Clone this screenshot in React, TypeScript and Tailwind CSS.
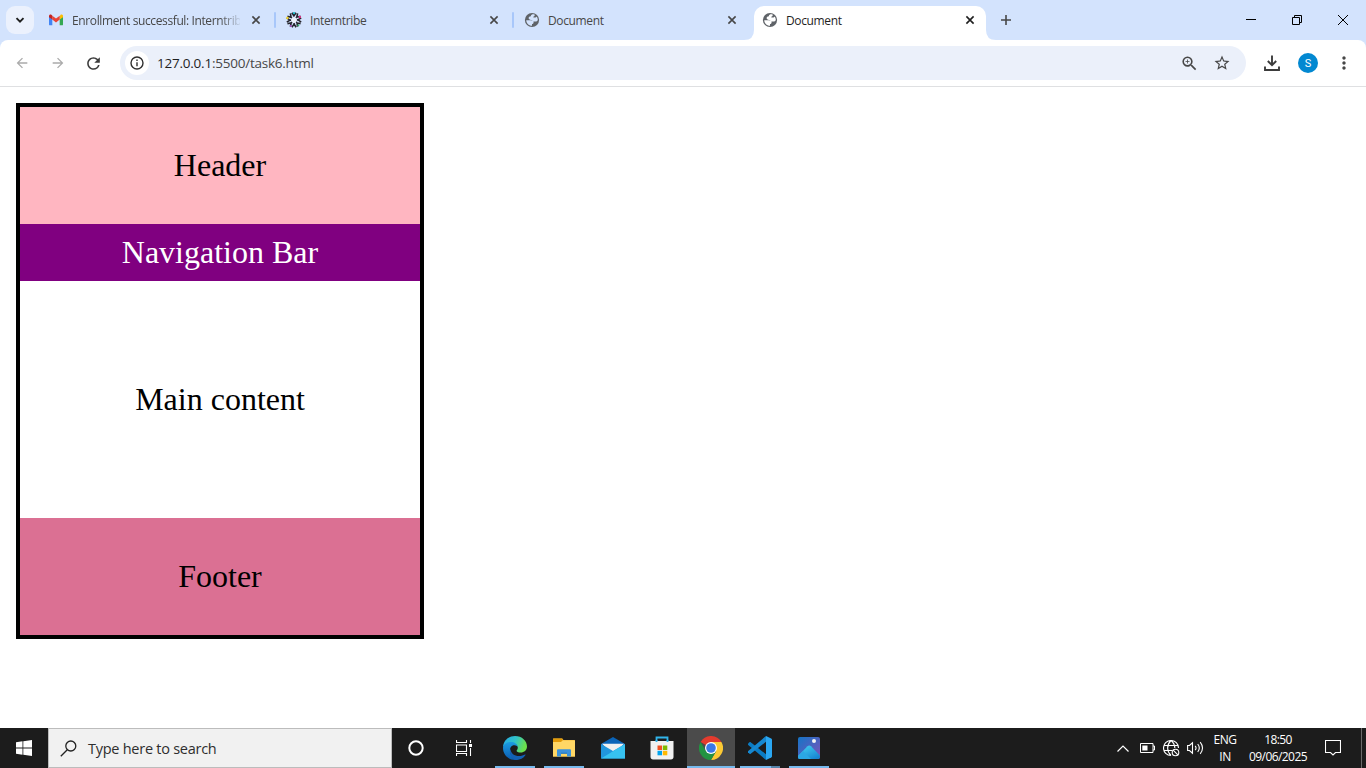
import type { ReactNode } from "react";
import { MdArrowBack, MdArrowForward, MdRefresh, MdStarOutline, MdZoomIn, MdMoreVert } from "react-icons/md";

const ui = "font-['Open_Sans','Noto_Sans',sans-serif]";

function Close({ color }: { color: string }) {
  return (
    <svg width="16" height="16" viewBox="0 0 16 16" fill="none" stroke={color} strokeWidth="1.6">
      <path d="M4.4 4.4l7.2 7.2M11.6 4.4l-7.2 7.2" />
    </svg>
  );
}

function Gmail() {
  return (
    <svg width="16" height="16" viewBox="0 0 16 16">
      <path d="M1 4.2v8.2c0 .5.4.9.9.9H4.300V7z" fill="#4285f4" />
      <path d="M15 4.200v8.200c0 .5-.4.9-.9.9h-2.400V7z" fill="#34a853" />
      <path d="M11.700 4.200V7.600L15 5.200V4c0-1.300-1.400-1.900-2.400-1.200z" fill="#fbbc04" />
      <path d="M4.300 7.600V3.800L8 6.600l3.700-2.800v3.800L8 10.400z" fill="#ea4335" />
      <path d="M1 4v1.200l3.300 2.400V3.800L3.400 2.800C2.400 2 1 2.700 1 4z" fill="#c5221f" />
    </svg>
  );
}

function Globe({ land }: { land: string }) {
  return (
    <svg width="16" height="16" viewBox="0 0 16 16">
      <circle cx="8" cy="8" r="7.100" fill="#5f6368" />
      <path
        d="M10.800 2.700C9.900 2.300 8.700 2.300 7.900 2.500 7 3 6.900 3.600 6.900 4.200 5.500 4.200 4.600 5 4.600 6.100S5.600 7.900 7 7.900h1.200c.2 1.100.9 1.600 1.900 1.600h1.500c.9 0 1.500-.5 2.200-1.300.1-1.500-.4-2.700-1.200-3.700-.3.800-.9 1.100-1.700 1.100H9.400V4.600c.9-.1 1.300-.9 1.400-1.900zM2.200 8.300c.1 2.400 1.700 4.500 3.900 5.200.5.200 1.200.3 1.900.3v-1.700c1-.1 1.600-.7 1.600-1.600 0-1.400-.9-2.200-2.400-2.200z"
        fill={land}
      />
    </svg>
  );
}

function Tribe() {
  return (
    <svg width="16" height="16" viewBox="0 0 16 16">
      <path d="M8 5L10.200 5.700 11 8l-.9 2.200L8 11l-2.200-.8L5 8l.8-2.300z" fill="#eef2fb" />
      {[0, 45, 90, 135, 180, 225, 270, 315].map((a) => (
        <path key={a} transform={`rotate(${a} 8 8)`} d="M5.900.8L7.900 3.900 10.100.8M7.900 3.600v1.500" fill="none" stroke="#25242c" strokeWidth="1.600" />
      ))}
      <circle cx="8" cy="1.200" r="1.100" fill="#18b6c4" />
      <circle cx="13.800" cy="5" r="1.200" fill="#e72c83" />
      <circle cx="1.400" cy="6" r="1.200" fill="#f3d321" />
      <circle cx="4.800" cy="14" r="1" fill="#a34fc0" />
      <circle cx="12.300" cy="13.300" r="1" fill="#35a96b" />
    </svg>
  );
}

function Tab({ icon, title, active, fade }: { icon: ReactNode; title: string; active?: boolean; fade?: boolean }) {
  return (
    <div className={active ? "relative flex h-[34px] w-[232px] items-start rounded-t-[10px] bg-white pt-1.5 pl-2" : "flex h-[34px] w-[232px] items-start pt-1.5 pl-2"}>
      {active && (
        <svg className="absolute bottom-0 -left-2.5" width="252" height="10" viewBox="0 0 252 10" fill="#fff">
          <path d="M0 10Q10 10 10 0V10zM252 10Q242 10 242 0V10z" />
        </svg>
      )}
      <span className="flex size-4 items-center justify-center">{icon}</span>
      <span className={`ml-2 h-5 w-[168px] overflow-hidden text-[12px] leading-[17px] whitespace-nowrap ${active ? "text-[#1f1f1f]" : "text-[#474747]"} ${fade ? "tracking-[-0.38px] [mask-image:linear-gradient(to_right,black_148px,transparent_170px)]" : "tracking-[-0.36px]"}`}>
        {title}
      </span>
      <span className="ml-2">
        <Close color={active ? "#1f1f1f" : "#474747"} />
      </span>
    </div>
  );
}

function Separator() {
  return <div className="mx-0.5 mt-1.5 h-4 w-0.5 rounded-full bg-[#a8c7fa]" />;
}

function Chrome() {
  return (
    <>
      <div className="flex h-10 items-start bg-[#d3e3fd] pt-1.5 pl-1.5">
        <div className="mr-1.5 flex size-7 items-center justify-center rounded-[9px] bg-[#ebf1fd]">
          <svg width="12" height="12" viewBox="0 0 12 12" fill="none" stroke="#1f1f1f" strokeWidth="1.900">
            <path d="M2.500 4.200L6 7.700l3.500-3.500" />
          </svg>
        </div>
        <Tab icon={<Gmail />} title="Enrollment successful: Interntrib" fade />
        <Separator />
        <Tab icon={<Tribe />} title="Interntribe" />
        <Separator />
        <Tab icon={<Globe land="#d3e3fd" />} title="Document" />
        <div className="w-1.5" />
        <Tab icon={<Globe land="#ffffff" />} title="Document" active />
        <svg className="ml-3 mt-1.5" width="16" height="16" viewBox="0 0 16 16" stroke="#474747" strokeWidth="1.600">
          <path d="M8 3v10M3 8h10" />
        </svg>
        <div className="-mt-1.5 ml-auto flex h-10">
          <div className="flex w-[46px] items-center justify-center">
            <svg width="10" height="10" viewBox="0 0 10 10" stroke="#000"><path d="M0 4.500h10" /></svg>
          </div>
          <div className="flex w-[46px] items-center justify-center">
            <svg width="10" height="10" viewBox="0 0 10 10" fill="none" stroke="#000"><path d="M.5 2.500h7v7h-7zM2.500 2.500v-2h7v7h-2" /></svg>
          </div>
          <div className="flex w-[46px] items-center justify-center">
            <svg width="10" height="10" viewBox="0 0 10 10" stroke="#000"><path d="M0 0l10 10M10 0L0 10" /></svg>
          </div>
        </div>
      </div>
      <div className="bg-[#d3e3fd]">
        <div className="flex h-[47px] items-start rounded-t-lg border-b border-[#dfe0e2] bg-white pt-1.5">
          <div className="flex h-[34px] w-[120px] items-center pl-3.5">
            <MdArrowBack color="#ababab" className="size-4 shrink-0" />
            <MdArrowForward color="#ababab" className="ml-5 size-4 shrink-0" />
            <MdRefresh color="#3c3c3c" className="ml-[18px] size-[19px] shrink-0" />
          </div>
          <div className="flex h-[34px] w-[1126px] items-center rounded-full bg-[#ebf0fa] pl-[5px]">
            <div className="flex size-6 items-center justify-center rounded-full bg-white">
              <svg width="14" height="14" viewBox="0 0 14 14" fill="none" stroke="#303030" strokeWidth="1.400">
                <circle cx="7" cy="7" r="6" />
                <path d="M7 6.300v4M7 3.500v1.500" />
              </svg>
            </div>
            <span className="ml-2 text-[13.500px] leading-4 tracking-[-0.23px] whitespace-nowrap text-[#474747]">
              <span className="text-[#1f1f1f]">127.0.0.1</span>:5500/task6.html
            </span>
            <MdZoomIn size={19} color="#474747" className="ml-auto" />
            <MdStarOutline size={18} color="#474747" className="mr-[15px] ml-[14px]" />
          </div>
          <div className="flex h-[34px] items-center">
            <svg className="ml-[17px]" width="18" height="18" viewBox="0 0 18 18" fill="none" stroke="#3c3c3c" strokeWidth="1.900">
              <path d="M9 1.500v9.500M4.800 7l4.200 4.200L13.200 7M2 12.500V16h14v-3.500" />
            </svg>
            <div className="ml-[17px] flex size-5 items-center justify-center rounded-full bg-[#0288d1] font-[Roboto] text-[11px] leading-none text-white">S</div>
            <MdMoreVert size={20} color="#474747" className="ml-4" />
          </div>
        </div>
      </div>
    </>
  );
}

function Page() {
  return (
    <main className="h-[641px] bg-white p-4 font-['Liberation_Serif',serif] text-[32px] leading-[37px] text-black">
      <div className="w-[408px] border-4 border-black text-center">
        <div className="bg-[#ffb6c1] py-10">Header</div>
        <div className="bg-[#800080] py-2.5 text-white">Navigation Bar</div>
        <div className="py-[100px]">Main content</div>
        <div className="bg-[#db7093] py-10">Footer</div>
      </div>
    </main>
  );
}

function TaskItem({ children, bar, active }: { children: ReactNode; bar?: ReactNode; active?: boolean }) {
  return (
    <div className={active ? "mx-[0.5px] flex h-10 w-12 flex-col items-center bg-[#4b4b4b]" : "mx-[0.5px] flex h-10 w-12 flex-col items-center"}>
      <div className="flex h-[38px] items-center pt-0.5">{children}</div>
      {bar}
    </div>
  );
}

const Bar = <div className="h-0.5 w-10 bg-[#76b9ed]" />;

function Edge() {
  return (
    <svg width="24" height="24" viewBox="0 0 24 24">
      <defs>
        <linearGradient id="e1" x1="0" y1="0" x2="1" y2=".3"><stop stopColor="#24a8e8" /><stop offset=".55" stopColor="#31c3c8" /><stop offset="1" stopColor="#6be04c" /></linearGradient>
        <linearGradient id="e2" x1="0" y1="0" x2="0" y2="1"><stop stopColor="#1b9de2" /><stop offset="1" stopColor="#0b5bb0" /></linearGradient>
      </defs>
      <path d="M0 11C.5 4.500 5.500 0 12 0c7 0 12 5 12 10.500 0 3.800-3 6-6.200 6-2.600 0-4.200-.9-4.200-1.800 0-.8 1.200-1.200 1.200-3 0-2.500-2.600-4.200-6-4.200C4 7.500 1 9 0 11z" fill="url(#e1)" />
      <path d="M0 12c0-3.500 3.500-6 8-6 3.500 0 6.500 2 6.800 5-.6-1-1.800-1.700-3.300-1.700C8 9.300 7 12 7 14.500c0 5 4 9 9 9-1.200.4-2.500.5-4 .5C5.300 24 0 18.600 0 12z" fill="url(#e2)" />
      <path d="M7.500 12.500c0 5 4 7.500 8.500 7.500 2.500 0 4.500-.6 6-1.500.5-.2.800.1.500.6C20.500 22.500 17 24 13.500 24 8.500 23 5.500 17 7.500 12.500z" fill="#1460b5" />
    </svg>
  );
}

function Explorer() {
  return (
    <svg width="22" height="20" viewBox="0 0 22 20">
      <path d="M0 2.500V1.500C0 .8.500.5 1 .5h8L10.500 2H21c.6 0 1 .4 1 1v15.500H0z" fill="#f5bd3e" />
      <path d="M0 .5h9.500v2.300L8 4H0z" fill="#e39b09" />
      <path d="M0 4h8l2-1.500h12v16H0z" fill="#ffd765" />
      <path d="M4 18.500v-6c0-.8.500-1.200 1.200-1.200h11.600c.7 0 1.200.4 1.200 1.200v6h-4V15.500H8v3z" fill="#3b92da" />
      <path d="M8 14.700h6v1H8z" fill="#1e73bb" />
    </svg>
  );
}

function Mail() {
  return (
    <svg width="24" height="22" viewBox="0 0 24 22">
      <path d="M0 7L12 0l12 7v5H0z" fill="#0b64b8" />
      <path d="M1 6.800h22L14 16h-4z" fill="#f0f0f0" />
      <path d="M0 7l12 7 12-7v14.500H0z" fill="#2196dd" />
      <path d="M24 7L0 21.500h24z" fill="#37c2f1" />
    </svg>
  );
}

function Store() {
  return (
    <svg width="24" height="24" viewBox="0 0 24 24">
      <path d="M6.500 5.500V1.500h11v4" fill="none" stroke="#31b5eb" strokeWidth="1.800" />
      <path d="M.5 5h23v16c0 1.300-1 2.500-2.500 2.500H3C1.500 23.500.5 22.300.5 21z" fill="#f1f1f1" />
      <path d="M6.500 4v2M17.500 4v2" stroke="#31b5eb" strokeWidth="1.800" />
      <path d="M7.500 9.500H12V14H7.500z" fill="#f25022" />
      <path d="M12.800 9.500h4.500V14h-4.500z" fill="#7fba00" />
      <path d="M7.500 14.800H12v4.500H7.500z" fill="#00a4ef" />
      <path d="M12.800 14.800h4.500v4.500h-4.500z" fill="#ffb900" />
    </svg>
  );
}

function ChromeLogo() {
  return (
    <svg width="24" height="24" viewBox="0 0 24 24">
      <path d="M12 12L1.600 6a12 12 0 0120.800 0z" fill="#e33b2e" />
      <path d="M12 6h10.400A12 12 0 0112 24l5.200-9z" fill="#fcc934" />
      <path d="M6.800 15L1.600 6A12 12 0 0012 24l5.200-9z" fill="#229342" />
      <circle cx="12" cy="12" r="6" fill="#fff" />
      <circle cx="12" cy="12" r="4.800" fill="#3b78e7" />
    </svg>
  );
}

function Code() {
  return (
    <svg width="24" height="24" viewBox="0 0 24 24">
      <path d="M0 7.700l1.500-1.400c.4-.3.800-.3 1.200 0L18 18.200V24L.2 9c-.4-.4-.5-.9-.2-1.300z" fill="#0b7cc4" />
      <path d="M0 16.300l1.500 1.400c.4.3.8.3 1.200 0L18 5.800V0L.2 15c-.4.4-.5.900-.2 1.300z" fill="#1688d0" />
      <path d="M18 0l5.200 2.400c.5.300.8.700.8 1.300v16.600c0 .6-.3 1-.8 1.300L18 24z" fill="#2aa7f2" />
    </svg>
  );
}

function Photos() {
  return (
    <svg width="22" height="22" viewBox="0 0 22 22">
      <defs>
        <linearGradient id="p1" x1="0" y1="0" x2="1" y2="1"><stop stopColor="#1475c7" /><stop offset="1" stopColor="#8151b9" /></linearGradient>
        <linearGradient id="p2" x1="0" y1="0" x2=".8" y2="1"><stop stopColor="#48d7f4" /><stop offset="1" stopColor="#1684d2" /></linearGradient>
      </defs>
      <rect width="22" height="22" rx="2" fill="url(#p1)" />
      <path d="M0 19L9.500 9.200c1-1 2.500-1 3.500 0L22 18.500V20a2 2 0 01-2 2H2a2 2 0 01-2-2z" fill="url(#p2)" />
      <path d="M0 19l5-5 8 8H2a2 2 0 01-2-2z" fill="#2ba7e4" />
      <circle cx="16" cy="4" r="2" fill="#f3f3f3" />
    </svg>
  );
}

function Taskbar() {
  return (
    <div className="flex h-10 bg-[#1c1c1c] text-white">
      <div className="flex w-12 items-center justify-center">
        <svg width="16" height="16" viewBox="0 0 16 16" fill="#fff">
          <path d="M0 2.200L6.500 1.300V7.600H0zM7.300 1.200L16 0v7.600H7.300zM0 8.400h6.500v6.300L0 13.800zM7.300 8.400H16V16l-8.700-1.200z" />
        </svg>
      </div>
      <div className="flex w-[344px] items-center border border-[#bcbcbc] bg-[#f1f1f1] pl-[11px]">
        <svg width="17" height="17" viewBox="0 0 17 17" fill="none" stroke="#222" strokeWidth="1.300">
          <circle cx="10.800" cy="6" r="5" />
          <path d="M7.300 9.700L.8 16.200" />
        </svg>
        <span className="mt-px ml-[11px] text-[14.500px] leading-5 tracking-[-0.26px] text-[#2e2e2e]">Type here to search</span>
      </div>
      <div className="flex w-12 items-center justify-center">
        <svg width="16" height="16" viewBox="0 0 16 16" fill="none" stroke="#fff" strokeWidth="2"><circle cx="8" cy="8" r="6.700" /></svg>
      </div>
      <div className="flex w-[50.500px] items-center pl-4">
        <svg width="17" height="16" viewBox="0 0 17 16" fill="none" stroke="#fff" strokeWidth="1.100">
          <path d="M.5 0v2.500h10V0M.5 16v-2.500h10V16M.5 5h10v6.500H.5zM14.500 0v3M14.500 8v8" />
          <path d="M13 4h3v3h-3z" fill="#fff" stroke="none" />
        </svg>
      </div>
      <TaskItem bar={Bar}><Edge /></TaskItem>
      <TaskItem bar={Bar}><Explorer /></TaskItem>
      <TaskItem><Mail /></TaskItem>
      <TaskItem><Store /></TaskItem>
      <TaskItem active bar={<div className="h-0.5 w-12 bg-[#76b9ed]" />}><ChromeLogo /></TaskItem>
      <TaskItem bar={<div className="flex h-0.5 w-10 bg-[#5684a9]"><div className="w-[31px] bg-[#76b9ed]" /></div>}><Code /></TaskItem>
      <TaskItem bar={Bar}><Photos /></TaskItem>
      <div className="ml-auto flex w-[249px] items-center">
        <svg width="12" height="7" viewBox="0 0 12 7" fill="none" stroke="#fff" strokeWidth="1.200"><path d="M.5 6.500L6 1l5.500 5.500" /></svg>
        <svg className="ml-[11px]" width="16" height="10" viewBox="0 0 16 10" fill="none" stroke="#fff">
          <path d="M.5.5h12.500v9H.5zM13 3h1.500v4H13" />
          <path d="M2.300 2.500h5.200v5H2.300z" fill="#fff" stroke="none" />
        </svg>
        <svg className="ml-[7px]" width="17" height="17" viewBox="0 0 17 17" fill="none" stroke="#fff" strokeWidth="1.100">
          <path d="M8 15.500a7.500 7.500 0 117.500-7.500M8 .5C3.500 5 3.500 11 8 15.500M8 .5c2.800 2.300 3.800 5 3.800 7.500M1.200 5.500h13.600M1.200 10.500H9" />
          <circle cx="12.500" cy="12.500" r="3.300" />
          <path d="M10.200 10.200l4.600 4.600" />
        </svg>
        <svg className="ml-[7px]" width="18" height="14" viewBox="0 0 18 14" fill="none" stroke="#fff" strokeWidth="1.100">
          <path d="M.6 4.500H2.500L5.500 1.800v10.400L2.500 9.500H.6z" />
          <path d="M8.200 4.800c1 1.300 1 3.100 0 4.400M10.700 3c2 2.500 2 5.500 0 8M13.200 1.200c2.800 3.500 2.800 8.100 0 11.600" />
        </svg>
        <div className="ml-[6px] w-[28px] text-center text-[12px] leading-[17px] tracking-[-0.4px]">ENG<br />IN</div>
        <div className="ml-[7px] w-[64px] text-center text-[12px] leading-[17px] tracking-[-0.58px] whitespace-nowrap">18:50<br />09/06/2025</div>
        <svg className="ml-[15px]" width="16" height="16" viewBox="0 0 16 16" fill="none" stroke="#fff" strokeWidth="1.100">
          <path d="M.5.5h15v12h-5L8 15l-2.500-2.500h-5z" />
        </svg>
        <div className="mr-1 ml-auto h-10 w-px bg-[#6a6a6a]" />
      </div>
    </div>
  );
}

export default function App() {
  return (
    <div className={`h-[768px] w-[1366px] overflow-hidden bg-white ${ui}`}>
      <Chrome />
      <Page />
      <Taskbar />
    </div>
  );
}
